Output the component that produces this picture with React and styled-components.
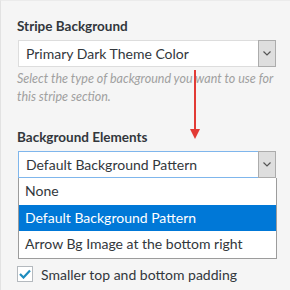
import React from "react";
import styled, { createGlobalStyle } from "styled-components";

const Global = createGlobalStyle`
  html, body { margin: 0; padding: 0; }
  body { background: #f5f5f5; font-family: Lato, "Open Sans", sans-serif; color: #32373c; }
`;

const Panel = styled.div`
  position: relative;
  width: 290px;
  height: 290px;
  box-sizing: border-box;
  padding: 16px 14px 0 16px;
  border-left: 1px solid #e2e2e2;
  border-top: 1px solid #ebebeb;
`;

const Title = styled.div`
  font-weight: 700;
  font-size: 13.5px;
  line-height: 18px;
  color: #32373c;
  margin-top: ${(p) => p.$top || 0}px;
  margin-bottom: 5px;
`;

const SelectBox = styled.div`
  display: flex;
  align-items: stretch;
  height: 27px;
  box-sizing: border-box;
  margin-left: 1px;
  width: 258px;
  background: #fff;
  border: 1px solid ${(p) => (p.$focus ? "#7fb6ec" : "#dddddd")};
`;

const SelectText = styled.div`
  flex: 1;
  font-size: 14px;
  line-height: 25px;
  padding-left: 7px;
  color: #32373c;
`;

const Caret = styled.div`
  width: 16px;
  background: #dedede;
  border: 1px solid #acacac;
  margin: -1px -1px -1px 0;
  display: flex;
  align-items: center;
  justify-content: center;
`;

const Help = styled.p`
  margin: 3px 0 0;
  font-size: 12.5px;
  line-height: 18px;
  font-style: italic;
  color: #a0a0a0;
`;

const List = styled.div`
  margin-left: 1px;
  width: 259px;
  box-sizing: border-box;
  background: #fff;
  border: 1px solid #9c9c9c;
  border-top: none;
`;

const Option = styled.div`
  height: 26.5px;
  line-height: 26px;
  font-size: 14px;
  padding-left: 6px;
  background: ${(p) => (p.$active ? "#0078d7" : "#fff")};
  color: ${(p) => (p.$active ? "#fff" : "#32373c")};
`;

const CheckRow = styled.label`
  display: flex;
  align-items: center;
  gap: 8px;
  margin-top: 7px;
  font-size: 14px;
  color: #32373c;
`;

const Box = styled.span`
  width: 14px;
  height: 14px;
  border: 1px solid #b4b9be;
  background: #fff;
  display: flex;
  align-items: center;
  justify-content: center;
`;

const Arrow = styled.svg`
  position: absolute;
  left: 188px;
  top: 69px;
`;

const CaretIcon = () => (
  <svg width="8" height="5" viewBox="0 0 8 5">
    <path d="M0.5 0.5 L4 4 L7.5 0.5" fill="none" stroke="#555" strokeWidth="1.2" />
  </svg>
);

export default function App() {
  return (
    <>
      <Global />
      <Panel>
        <Title>Stripe Background</Title>
        <SelectBox>
          <SelectText>Primary Dark Theme Color</SelectText>
          <Caret><CaretIcon /></Caret>
        </SelectBox>
        <Help>
          Select the type of background you want to use for this stripe section.
        </Help>
        <Title $top={22}>Background Elements</Title>
        <SelectBox $focus>
          <SelectText>Default Background Pattern</SelectText>
          <Caret><CaretIcon /></Caret>
        </SelectBox>
        <List>
          <Option>None</Option>
          <Option $active>Default Background Pattern</Option>
          <Option>Arrow Bg Image at the bottom right</Option>
        </List>
        <CheckRow>
          <Box>
            <svg width="12" height="10" viewBox="0 0 12 10">
              <path d="M1 5 L4.5 8.5 L11 1.5" fill="none" stroke="#1e8cbe" strokeWidth="2.2" />
            </svg>
          </Box>
          Smaller top and bottom padding
        </CheckRow>
        <Arrow width="12" height="70" viewBox="0 0 12 70">
          <rect x="5" y="0" width="2" height="60" fill="#e23a35" />
          <path d="M1 59 L11 59 L6 69 Z" fill="#e23a35" />
        </Arrow>
      </Panel>
    </>
  );
}
